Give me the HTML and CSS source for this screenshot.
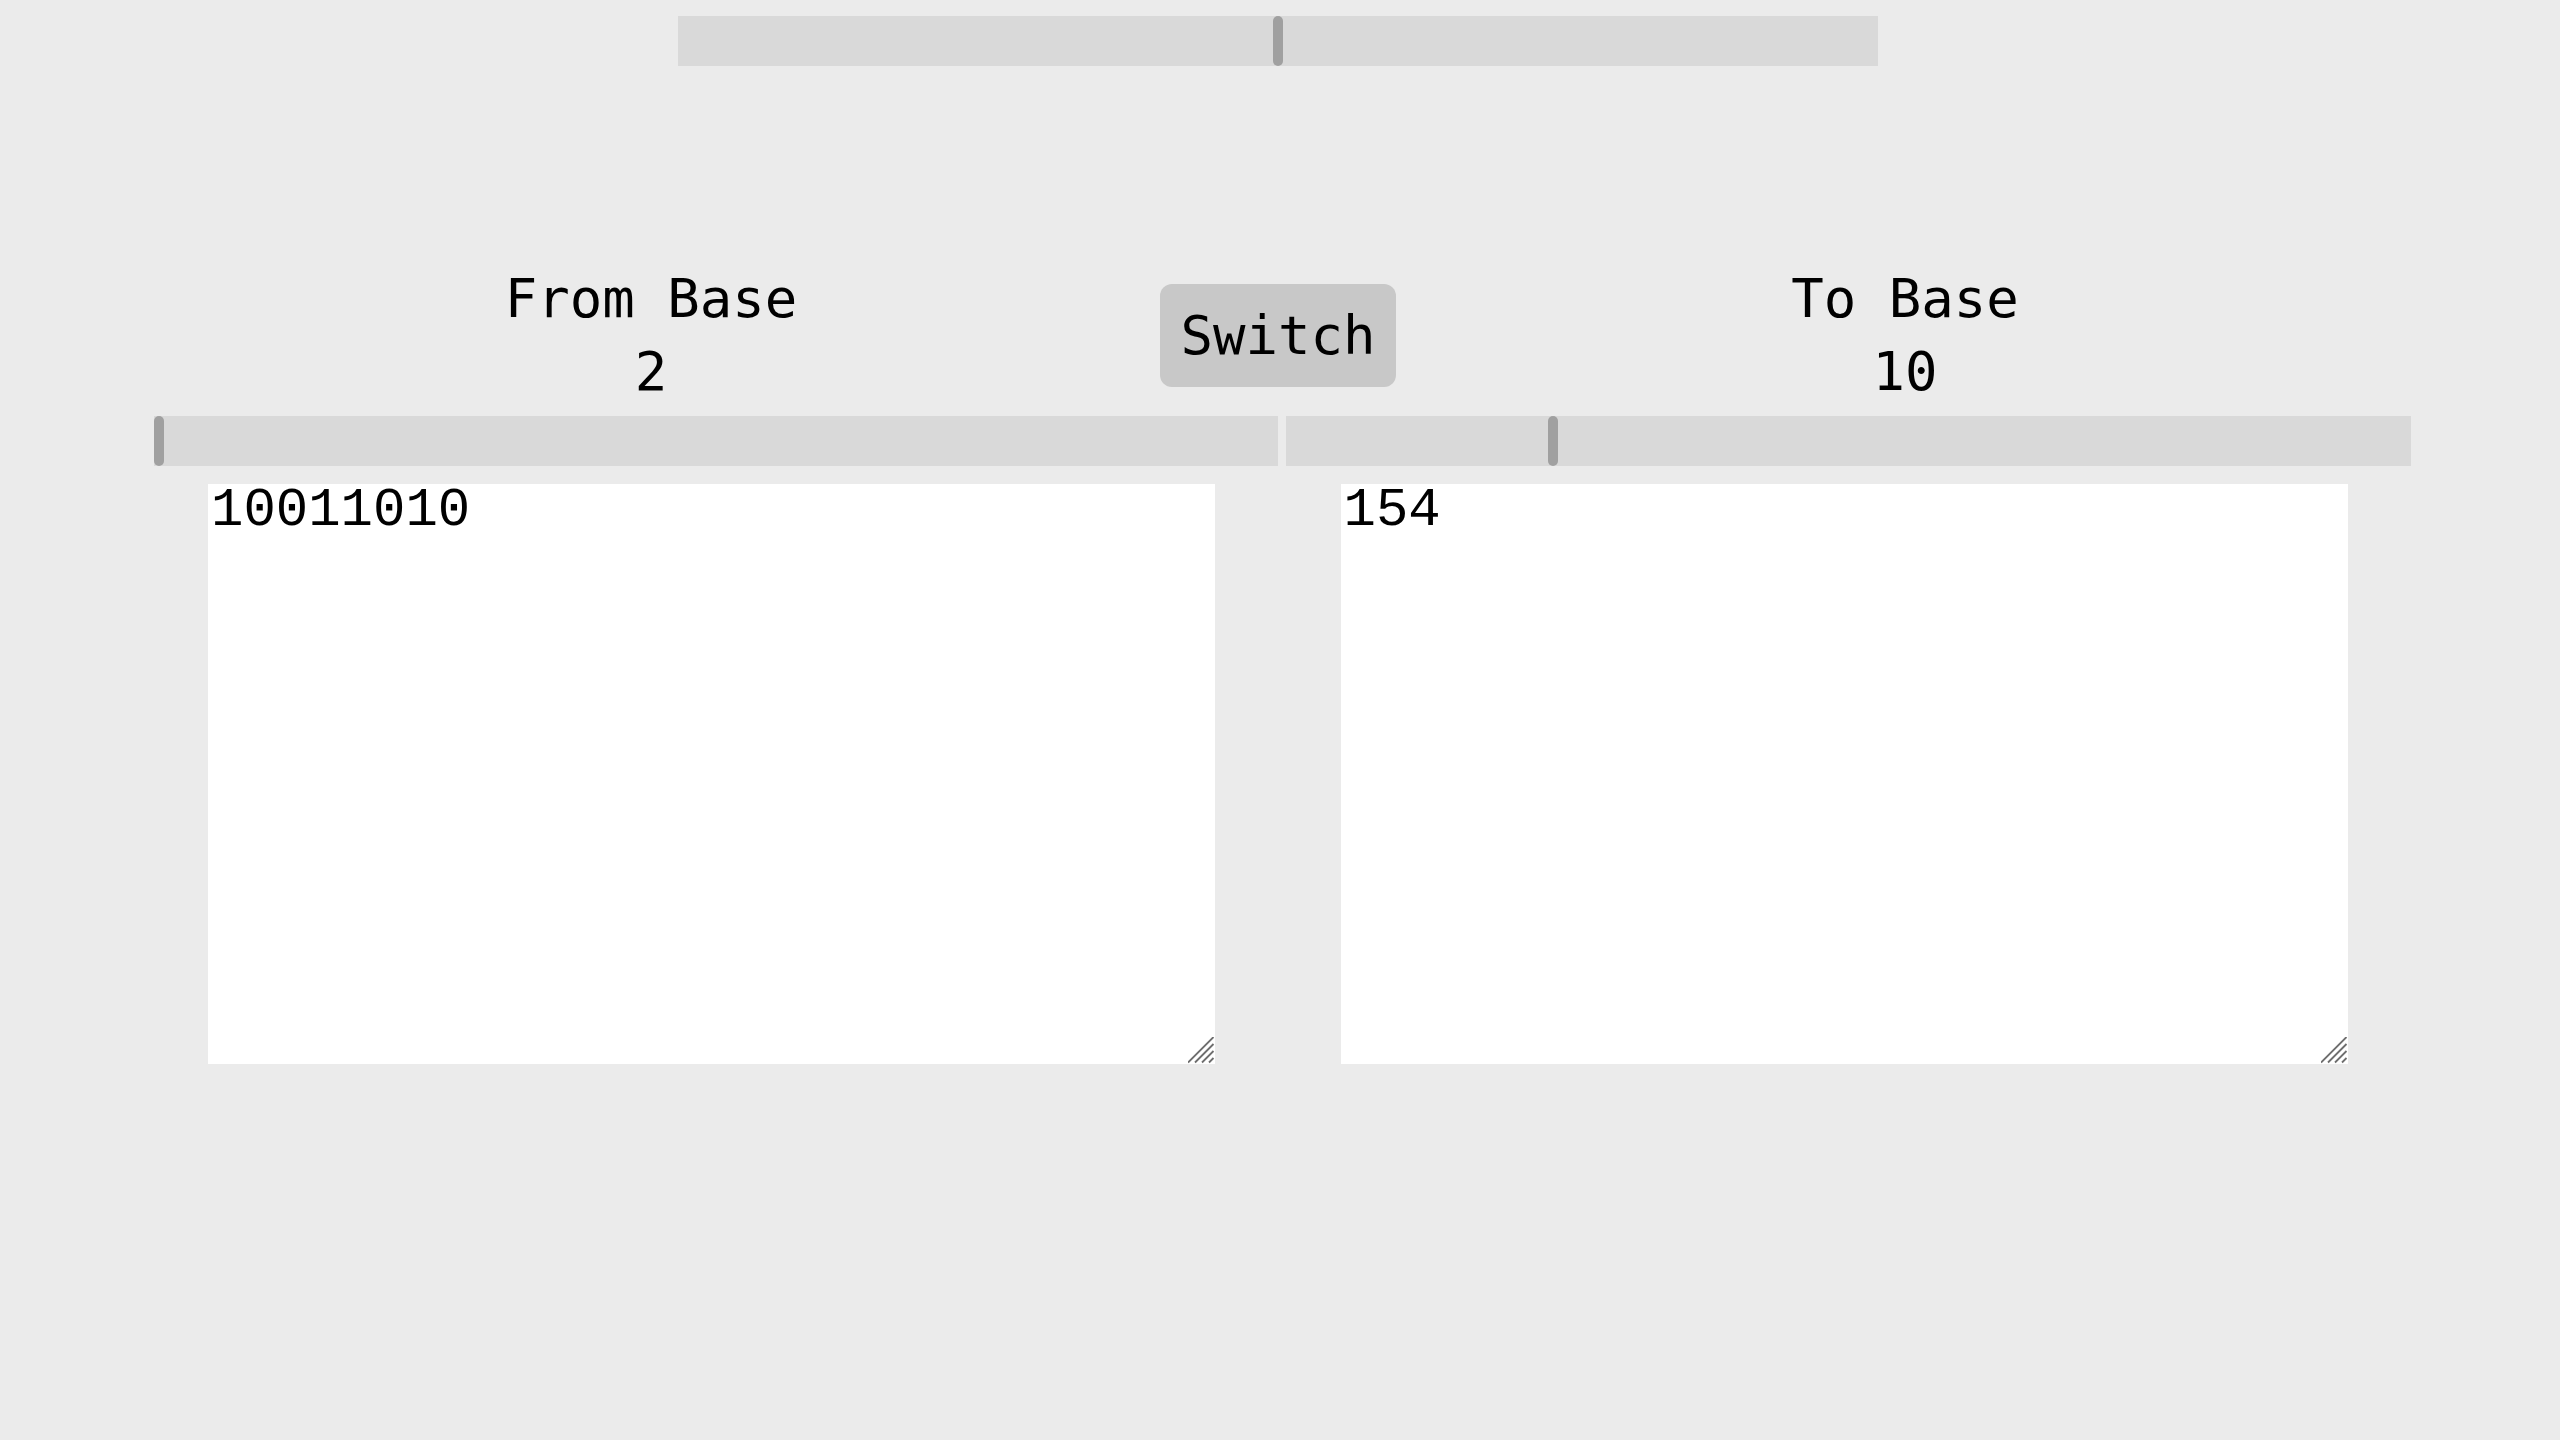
FILE: index.html
```html
<!DOCTYPE html>
<html lang="en">
<head>
    <meta charset="UTF-8">
    <meta name="viewport" content="width=device-width, initial-scale=1.0">
    <title>Base Converter</title>
    <link rel="stylesheet" href="styles.css">
</head>
<body>
    <div class="top-bar">
        <input type="range" id="size-slider" class="slider top-slider" min="0" max="100" value="50">
    </div>

    <div class="header">
        <div class="label">From Base<br><span id="from-value">2</span></div>
        <div class="switch-cell">
            <button class="switch-button" id="switch-button">Switch</button>
        </div>
        <div class="label">To Base<br><span id="to-value">10</span></div>
    </div>

    <div class="columns">
        <div class="column">
            <input type="range" id="from-base" class="slider" min="2" max="36" value="2">
            <div class="box-wrap">
                <textarea id="from-text" class="number-box" spellcheck="false">10011010</textarea>
                <svg class="grip" width="27" height="27" viewBox="0 0 27 27">
                    <rect width="27" height="27" fill="white"/>
                    <path d="M0 25.5L25.5 0M7 25.5L25.5 7M14 25.5L25.5 14M21 25.5L25.5 21" stroke="#6e6e6e" stroke-width="1.8"/>
                </svg>
            </div>
        </div>
        <div class="column">
            <input type="range" id="to-base" class="slider" min="2" max="36" value="10">
            <div class="box-wrap">
                <textarea id="to-text" class="number-box" spellcheck="false">154</textarea>
                <svg class="grip" width="27" height="27" viewBox="0 0 27 27">
                    <rect width="27" height="27" fill="white"/>
                    <path d="M0 25.5L25.5 0M7 25.5L25.5 7M14 25.5L25.5 14M21 25.5L25.5 21" stroke="#6e6e6e" stroke-width="1.8"/>
                </svg>
            </div>
        </div>
    </div>

    <script>
        var fromBase = document.getElementById('from-base');
        var toBase = document.getElementById('to-base');
        var fromText = document.getElementById('from-text');
        var toText = document.getElementById('to-text');

        function convert() {
            document.getElementById('from-value').textContent = fromBase.value;
            document.getElementById('to-value').textContent = toBase.value;
            var n = parseInt(fromText.value.trim(), fromBase.value);
            toText.value = isNaN(n) ? '' : n.toString(toBase.value);
        }

        fromBase.addEventListener('input', convert);
        toBase.addEventListener('input', convert);
        fromText.addEventListener('input', convert);

        document.getElementById('switch-button').addEventListener('click', function() {
            var b = fromBase.value;
            fromBase.value = toBase.value;
            toBase.value = b;
            fromText.value = toText.value;
            convert();
        });
    </script>
</body>
</html>
```

FILE: styles.css
```css
body {
    margin: 8px 12px 8px 8px;
    background-color: #ebebeb;
    font-family: 'DejaVu Sans Mono', monospace;
    font-size: 54px;
    color: black;
}

.top-bar {
    display: flex;
    justify-content: center;
    padding-top: 8px;
}

/* sliders */
.slider {
    -webkit-appearance: none;
    appearance: none;
    display: block;
    margin: 0;
    width: 100%;
    height: 50px;
    background: #d9d9d9;
    outline: none;
}

.slider::-webkit-slider-thumb {
    -webkit-appearance: none;
    appearance: none;
    width: 10px;
    height: 50px;
    border-radius: 5px;
    background: #a0a0a0;
    cursor: pointer;
}

.top-slider {
    width: 1200px;
}

.header {
    display: grid;
    grid-template-columns: repeat(3, 627px);
    justify-content: center;
    align-items: center;
    margin-top: 196px;
    text-align: center;
}

.label {
    line-height: 73px;
}

.switch-cell {
    display: flex;
    justify-content: center;
}

.switch-button {
    font-family: inherit;
    font-size: inherit;
    color: black;
    background-color: #c8c8c8;
    border: none;
    border-radius: 12px;
    padding: 20px;
    cursor: pointer;
}

.columns {
    display: grid;
    grid-template-columns: 1124px 1125px;
    gap: 8px;
    margin-top: 8px;
    margin-left: 146px;
}

.column {
    display: flex;
    flex-direction: column;
    align-items: center;
    gap: 18px;
}

.box-wrap {
    position: relative;
    margin-right: 9px;
}

.number-box {
    display: block;
    width: 1007px;
    height: 580px;
    box-sizing: border-box;
    margin: 0;
    padding: 0 3px;
    border: none;
    outline: none;
    background: white;
    font-family: 'Liberation Mono', monospace;
    font-size: 54px;
    line-height: 54px;
    color: black;
}

/* resize grip drawn at the larger size */
.grip {
    position: absolute;
    right: 0;
    bottom: 0;
    pointer-events: none;
}
```
